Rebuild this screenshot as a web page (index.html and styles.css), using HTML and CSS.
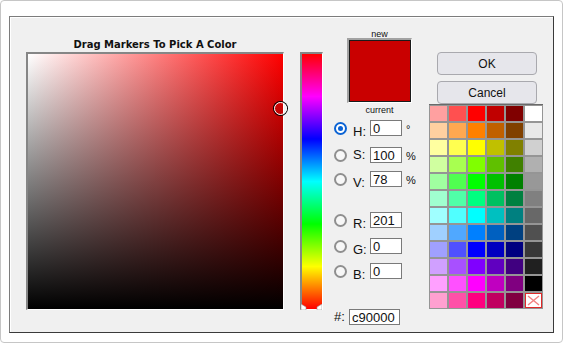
FILE: index.html
```html
<!DOCTYPE html>
<html lang="en">

<head>
    <meta charset="UTF-8">
    <meta name="viewport" content="width=device-width, initial-scale=1.0">
    <title>Color Picker</title>
    <link rel="stylesheet" href="styles.css">
</head>

<body>
    <div class="frame">
        <div class="panel">

            <!-- Saturation / Value field -->
            <div class="sv-col">
                <div class="title">Drag Markers To Pick A Color</div>
                <div class="sv-box">
                    <div class="sv-field"></div>
                    <span class="sv-marker"></span>
                </div>
            </div>

            <!-- Hue bar -->
            <div class="hue-box">
                <div class="hue-field"></div>
                <svg class="hue-marker" width="21" height="6" viewBox="0 0 21 6">
                    <polygon points="0,0 5,3 5,6 0,6" fill="#fff" stroke="#999" stroke-width="0.6"></polygon>
                    <polygon points="21,0 16,3 16,6 21,6" fill="#fff" stroke="#999" stroke-width="0.6"></polygon>
                </svg>
            </div>

            <!-- Values -->
            <div class="mid-col">
                <div class="swatch-block">
                    <div class="cap">new</div>
                    <div class="swatch-frame">
                        <div class="swatch"></div>
                    </div>
                    <div class="cap cap-current">current</div>
                </div>

                <div class="field-row row-h">
                    <span class="radio checked"></span>
                    <span class="field-label">H:</span>
                    <input class="field" type="text" value="0">
                    <span class="unit">&deg;</span>
                </div>
                <div class="field-row row-s">
                    <span class="radio"></span>
                    <span class="field-label">S:</span>
                    <input class="field" type="text" value="100">
                    <span class="unit">%</span>
                </div>
                <div class="field-row row-v">
                    <span class="radio"></span>
                    <span class="field-label">V:</span>
                    <input class="field" type="text" value="78">
                    <span class="unit">%</span>
                </div>
                <div class="field-row row-r">
                    <span class="radio"></span>
                    <span class="field-label">R:</span>
                    <input class="field" type="text" value="201">
                </div>
                <div class="field-row row-g">
                    <span class="radio"></span>
                    <span class="field-label">G:</span>
                    <input class="field" type="text" value="0">
                </div>
                <div class="field-row row-b">
                    <span class="radio"></span>
                    <span class="field-label">B:</span>
                    <input class="field" type="text" value="0">
                </div>
                <div class="field-row row-hex">
                    <span class="hex-label">#:</span>
                    <input class="field hex-field" type="text" value="c90000">
                </div>
            </div>

            <!-- Buttons and palette -->
            <div class="right-col">
                <button class="btn">OK</button>
                <button class="btn btn-cancel">Cancel</button>
                <div class="palette" id="palette"></div>
            </div>

        </div>
    </div>

    <script>
        // Palette colours, row by row (last cell = no colour)
        const colors = [
            '#ffa0a0', '#ff5050', '#ff0000', '#c00000', '#800000', '#ffffff',
            '#ffd0a0', '#ffa850', '#ff8000', '#c06000', '#804000', '#e8e8e8',
            '#ffffa0', '#ffff50', '#ffff00', '#c0c000', '#808000', '#d0d0d0',
            '#d0ffa0', '#a8ff50', '#80ff00', '#60c000', '#408000', '#b0b0b0',
            '#a0ffa0', '#50ff50', '#00ff00', '#00c000', '#008000', '#989898',
            '#a0ffd0', '#50ffa8', '#00ff80', '#00c060', '#008040', '#808080',
            '#a0ffff', '#50ffff', '#00ffff', '#00c0c0', '#008080', '#686868',
            '#a0d0ff', '#50a8ff', '#0080ff', '#0060c0', '#004080', '#505050',
            '#a0a0ff', '#5050ff', '#0000ff', '#0000c0', '#000080', '#383838',
            '#d0a0ff', '#a850ff', '#8000ff', '#6000c0', '#400080', '#202020',
            '#ffa0ff', '#ff50ff', '#ff00ff', '#c000c0', '#800080', '#000000',
            '#ffa0d0', '#ff50a8', '#ff0080', '#c00060', '#800040', null
        ];

        const palette = document.getElementById('palette');
        colors.forEach(color => {
            const cell = document.createElement('div');
            cell.classList.add('cell');
            if (color) {
                cell.style.background = color;
            } else {
                cell.classList.add('cell-none');
                cell.innerHTML = '<svg width="17" height="15" viewBox="0 0 17 15">' +
                    '<line x1="3" y1="3" x2="14" y2="12" stroke="#f28080" stroke-width="1.4"/>' +
                    '<line x1="14" y1="3" x2="3" y2="12" stroke="#f28080" stroke-width="1.4"/></svg>';
            }
            palette.appendChild(cell);
        });
    </script>
</body>

</html>
```

FILE: styles.css
```css
/* General Styles */
body {
    margin: 0;
    font-family: 'Liberation Sans', Arial, sans-serif;
    background: #ffffff;
    color: #111;
}

/* Outer window */
.frame {
    width: 563px;
    height: 343px;
    box-sizing: border-box;
    border: 1px solid #c6c6c6;
    border-radius: 4px;
    background: #ffffff;
    padding: 15px 0 0 8px;
}

.panel {
    width: 545px;
    height: 317px;
    box-sizing: border-box;
    background: #f0f0f0;
    border: 1px solid #7c7c7c;
    border-right-color: #3a3a3a;
    border-bottom-color: #3a3a3a;
    box-shadow: inset 1px 1px 0 #ffffff;
    display: flex;
    align-items: flex-start;
}

/* Saturation / Value */
.sv-col {
    margin-left: 16px;
    margin-top: 20px;
    width: 258px;
}

.title {
    font-family: 'DejaVu Sans', 'Liberation Sans', sans-serif;
    font-size: 10px;
    font-weight: bold;
    line-height: 15px;
    text-align: center;
    color: #111;
}

.sv-box {
    position: relative;
    width: 258px;
    height: 258px;
    box-sizing: border-box;
    border-top: 2px solid #868686;
    border-left: 2px solid #868686;
    border-right: 1px solid #ffffff;
    border-bottom: 1px solid #ffffff;
}

.sv-field {
    width: 100%;
    height: 100%;
    background:
        linear-gradient(to top, #000000, rgba(0, 0, 0, 0)),
        linear-gradient(to right, #ffffff, #ff0000);
}

.sv-marker {
    position: absolute;
    left: 246px;
    top: 48px;
    width: 13px;
    height: 13px;
    box-sizing: border-box;
    border: 1.5px solid #ffffff;
    border-radius: 50%;
    background: transparent;
    box-shadow: 0 0 0 1px #000000;
}

/* Hue bar */
.hue-box {
    position: relative;
    margin-left: 16px;
    margin-top: 35px;
    width: 23px;
    height: 258px;
    box-sizing: border-box;
    border-top: 2px solid #868686;
    border-left: 2px solid #868686;
    border-right: 1px solid #ffffff;
    border-bottom: 1px solid #ffffff;
}

.hue-field {
    width: 100%;
    height: 100%;
    background: linear-gradient(to bottom,
            #ff0000 0%,
            #ff00ff 16.67%,
            #0000ff 33.33%,
            #00ffff 50%,
            #00ff00 66.67%,
            #ffff00 83.33%,
            #ff0000 100%);
}

.hue-marker {
    position: absolute;
    left: -1px;
    bottom: -1px;
    display: block;
}

/* Middle column */
.mid-col {
    margin-left: 11px;
    margin-top: 13px;
    width: 82px;
}

.swatch-block {
    margin-left: 13px;
    width: 65px;
}

.cap {
    font-size: 9px;
    line-height: 8px;
    text-align: center;
    color: #111;
}

.cap-current {
    margin-top: 1px;
    line-height: 12px;
}

.swatch-frame {
    width: 65px;
    height: 65px;
    box-sizing: border-box;
    border-top: 2px solid #a2a2a2;
    border-left: 2px solid #a2a2a2;
    border-right: 1px solid #ffffff;
    border-bottom: 1px solid #ffffff;
}

.swatch {
    width: 100%;
    height: 100%;
    box-sizing: border-box;
    border: 1px solid #1a1a1a;
    background: #c90000;
}

/* Field rows */
.field-row {
    display: flex;
    align-items: center;
    height: 16px;
}

.row-h {
    margin-top: 4px;
}

.row-s {
    margin-top: 11px;
}

.row-v {
    margin-top: 8px;
}

.row-r {
    margin-top: 25px;
}

.row-g {
    margin-top: 10px;
}

.row-b {
    margin-top: 9px;
}

.row-hex {
    margin-top: 30px;
}

.radio {
    position: relative;
    width: 13px;
    height: 13px;
    box-sizing: border-box;
    border: 2px solid #8f8f8f;
    border-radius: 50%;
    background: #f7f7f7;
    flex-shrink: 0;
}

.radio.checked {
    border-color: #0b63d4;
    background: #ffffff;
}

.radio.checked::after {
    content: '';
    position: absolute;
    left: 2px;
    top: 2px;
    width: 5px;
    height: 5px;
    border-radius: 50%;
    background: #0b63d4;
}

.field-label {
    align-self: flex-start;
    margin-left: 6px;
    width: 17px;
    padding-top: 5px;
    font-size: 13px;
    line-height: 14px;
    color: #111;
}

.row-s .field-label {
    padding-top: 1px;
}

.field {
    width: 32px;
    height: 16px;
    box-sizing: border-box;
    margin: 0;
    padding: 0 2px;
    border: 1px solid #7a7a7a;
    border-radius: 0;
    background: #ffffff;
    font-family: 'Liberation Sans', Arial, sans-serif;
    font-size: 13px;
    color: #111;
    outline: none;
}

.unit {
    align-self: flex-start;
    margin-left: 4px;
    padding-top: 2px;
    font-size: 11px;
    line-height: 14px;
    color: #111;
}

.hex-label {
    align-self: flex-start;
    width: 15px;
    padding-top: 1px;
    font-size: 13px;
    line-height: 14px;
    color: #111;
}

.hex-field {
    width: 51px;
}

/* Buttons and palette */
.right-col {
    margin-left: 13px;
    margin-top: 35px;
    width: 114px;
}

.btn {
    display: block;
    margin-left: 8px;
    width: 100px;
    height: 23px;
    padding: 0;
    border: 1px solid #a9a9ae;
    border-radius: 4px;
    background: #e6e6eb;
    font-family: 'Liberation Sans', Arial, sans-serif;
    font-size: 12px;
    color: #111;
    cursor: pointer;
}

.btn-cancel {
    margin-top: 6px;
}

.palette {
    display: grid;
    grid-template-columns: repeat(6, 17px);
    grid-template-rows: repeat(12, 15px);
    gap: 2px;
    padding: 1px;
    background: #959595;
    border-top: 1px solid #6a6a6a;
}

.cell {
    width: 17px;
    height: 15px;
}

.cell-none {
    box-sizing: border-box;
    background: #ffffff;
    border: 1.5px solid #e02828;
}

.cell-none svg {
    display: block;
    margin: -1.5px;
}
```
